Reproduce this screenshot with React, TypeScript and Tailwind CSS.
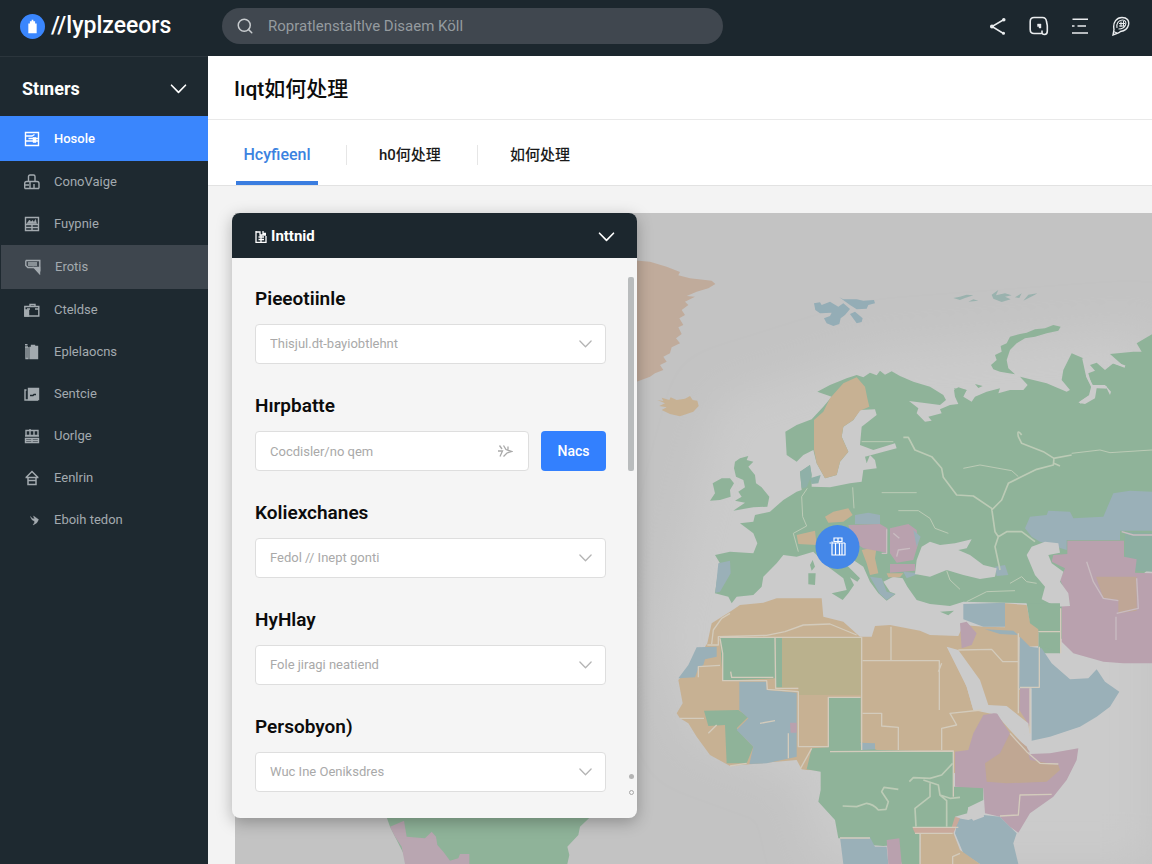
import React from "react";
import { Search } from "lucide-react";

const FONT =
  "font-[Roboto,'Noto_Sans_CJK_SC',sans-serif]";

function Chevron({ className }: { className: string }) {
  return (
    <svg viewBox="0 0 16 10" className={className} fill="none" stroke="currentColor" aria-hidden="true">
      <path d="M1 1.2 8 8.4 15 1.2" strokeWidth="1.6" strokeLinecap="round" strokeLinejoin="round" />
    </svg>
  );
}

const NAV: { label: string; row: string; icon: React.ReactNode }[] = [
  {
    label: "Hosole",
    row: "h-[45px] bg-[#3a86fd] text-white font-medium",
    icon: (
      <>
        <path d="M1.500 1.500h13v13h-13zM1.500 5h6.500l2.500-1.500M1.500 10h13M4.500 7.500H14" />
        <path d="M9 6.500h3v5H9z" fill="currentColor" strokeWidth=".5" />
      </>
    ),
  },
  {
    label: "ConoVaige",
    row: "h-[42px] text-[#a3aaaf]",
    icon: <path d="M4.500 7.500V2.500q0-1.500 1.500-1.500h3.500q1.500 0 1.500 1.500v5M4.500 7.500h6.500M.700 14.500V9.500q0-2 2-2h1.800M15 14.500V9.500q0-2-2-2h-2M.700 14.500H15M6 8v6M10 10v4M1 11h4" />,
  },
  {
    label: "Fuypnie",
    row: "h-[42px] text-[#a3aaaf]",
    icon: (
      <>
        <path d="M1.500 1.500h13v13h-13zM1.500 8.500h13M1.500 11.500h13M8 9v5" />
        <path d="M3 7.500 5.500 4 7 6l1.500-1.500L10 6.500l1.500-3 1 4z" fill="currentColor" strokeWidth=".6" />
      </>
    ),
  },
  {
    label: "Erotis",
    row: "h-[44px] ml-px bg-[#3e464e] text-[#a3aaaf]",
    icon: (
      <>
        <path d="M.800 1.500h14v11M.800 1.500v5l2 2H9M3 4h9M3 6h9" />
        <path d="M9 8.500h5.500v6z" fill="currentColor" />
      </>
    ),
  },
  {
    label: "Cteldse",
    row: "h-[42px] text-[#a3aaaf]",
    icon: (
      <>
        <path d="M.800 4.500h14v9.500h-14zM6 4.500V2.500h5v2M3 7h3M11 7h4" />
        <path d="M1 8h3.500v6H1z" fill="currentColor" />
      </>
    ),
  },
  {
    label: "Eplelaocns",
    row: "h-[42px] text-[#a3aaaf]",
    icon: (
      <>
        <path d="M1 .800h2.500M2 3v11.500h2V3M1 3h3" />
        <path d="M6 3.500h1.500v-2h3v1H13.500v12H6z" fill="currentColor" />
      </>
    ),
  },
  {
    label: "Sentcie",
    row: "h-[42px] text-[#a3aaaf]",
    icon: (
      <>
        <path d="M2.500 4H1v10h13" />
        <path d="M4.500 2.500h10v11h-10z" fill="currentColor" />
        <path d="M6 9.500h3l1-1h2" stroke="#1e2930" />
      </>
    ),
  },
  {
    label: "Uorlge",
    row: "h-[42px] text-[#a3aaaf]",
    icon: <path d="M2 2.500h12v5H2zM6 1v6.500M10 2v5.500M1 8h14M1.500 10.500h13v4h-13zM8 10.500v4M1.500 12.500h13" />,
  },
  {
    label: "Eenlrin",
    row: "h-[42px] text-[#a3aaaf]",
    icon: <path d="M2 7.500 8 1.500l6 6M1.500 7.500h13M4 8v6.500h8V8M4 10.500h8" strokeWidth="1.500" />,
  },
  {
    label: "Eboih tedon",
    row: "h-[42px] text-[#a3aaaf]",
    icon: (
      <path d="M6.500 4.500q1 2.500 4 2.500L9.500 4l5 3.500q-1 4-5.500 5.500 2-2 1.500-4-3-.500-4-4.500z" fill="currentColor" strokeWidth=".4" />
    ),
  },
];

function Sidebar() {
  return (
    <aside className="w-52 shrink-0 border-t border-[#2b353c] bg-[#1e2930]">
      <button type="button" className="flex h-[59px] w-full items-center justify-between pt-1 pr-[21px] pl-[22px] text-white">
        <span className="text-lg font-bold">Stıners</span>
        <Chevron className="h-[10px] w-[17px]" />
      </button>
      <nav>
        {NAV.map((item) => (
          <a key={item.label} href="#" className={`flex items-center gap-3.5 pl-6 text-[13px] ${item.row}`}>
            <svg viewBox="0 0 16 16" className="size-4" fill="none" stroke="currentColor" strokeWidth="1.4" aria-hidden="true">
              {item.icon}
            </svg>
            {item.label}
          </a>
        ))}
      </nav>
    </aside>
  );
}

function TopBar() {
  return (
    <header className="flex h-14 items-center bg-[#1c272e] pr-[21px] pl-5 text-white">
      <a href="#" className="flex w-[202px] shrink-0 items-center gap-1.5 pb-1">
        <svg viewBox="0 0 24 24" className="size-[25px]" aria-hidden="true">
          <circle cx="12" cy="12" r="12" fill="#3a86fd" />
          <path d="M8 9h8v9.500H8zM9.500 7h5v2h-5zM11.200 5.500h1.600V7h-1.600z" fill="#fff" />
        </svg>
        <span className="text-[23px] leading-8 font-medium">//lyplzeeors</span>
      </a>
      <label className="mb-1 flex h-9 w-full max-w-[501px] items-center gap-3.5 rounded-full bg-[#40474f] pl-3.5 text-[#c8cccf]">
        <Search className="size-[18px] shrink-0" strokeWidth={2} />
        <input
          type="search"
          aria-label="Search"
          placeholder="Ropratlenstaltlve Disaem Köll"
          className="w-full bg-transparent text-[15px] outline-none placeholder:text-[#959b9f]"
        />
      </label>
      <div className="ml-auto flex shrink-0 items-center gap-[21px] pb-1 text-[#e9ecee]">
        <button type="button" aria-label="Share">
          <svg viewBox="0 0 20 20" className="size-5" fill="none" stroke="currentColor" strokeWidth="1.500">
            <path d="M16 3.500 4 10.500l11.500 7" />
            <circle cx="15.800" cy="3.700" r="1" fill="currentColor" />
            <circle cx="4" cy="10.500" r="1.300" />
            <circle cx="15.500" cy="17.300" r=".8" fill="currentColor" />
          </svg>
        </button>
        <button type="button" aria-label="Capture">
          <svg viewBox="0 0 20 20" className="size-5" fill="none" stroke="currentColor" strokeWidth="1.600">
            <path d="M12.500 17.500H5Q1.200 17.500 1.200 13.500V5.500Q1.200 1.500 5 1.500h8.500q3.500 0 4 4l.8 4V15q0 3.500-2.800 3.500-2.500 0-2.500-2v-2" />
            <path d="M8.500 8h3.500v4h-2v-1.500H8.500z" fill="currentColor" strokeWidth=".4" />
          </svg>
        </button>
        <button type="button" aria-label="Menu">
          <svg viewBox="0 0 20 20" className="size-5" fill="none" stroke="currentColor" strokeWidth="1.600">
            <path d="M2.500 3.200H18M7.500 10H16M2 17h16M2 10h2.500" />
          </svg>
        </button>
        <button type="button" aria-label="Account">
          <svg viewBox="0 0 20 20" className="size-5" fill="none" stroke="currentColor" strokeWidth="1.400">
            <path d="M3 13.500C1.500 6 6 1.500 11 1.500c5 0 7.500 3 6.500 7.500-1 4-4.500 6-8 6.500l-1.500 1.200L2 19z" />
            <path d="M6 12C5 7.500 7.500 4 11.500 4c3 0 4 2.500 3 5-1 2.500-4 4-7 4M8 7.500h6M8 10h5.500M10 5.500v5.500M12.500 5v5M2.500 15.500 6 17" strokeWidth="1.100" />
          </svg>
        </button>
      </div>
    </header>
  );
}

function WorldMap() {
  return (
    <svg
      viewBox="235 213 917 651"
      preserveAspectRatio="xMinYMin slice"
      className="absolute inset-0 size-full"
      role="img"
      aria-label="Map"
    >
      <defs>
        <filter id="soft" x="-20%" y="-20%" width="140%" height="140%">
          <feGaussianBlur stdDeviation="22" />
        </filter>
      </defs>
      <rect x="235" y="213" width="917" height="651" fill="#c3c3c3" />
      <path d="M720 400 880 350 1152 330V864H820L800 780 690 740 660 640 700 470z" fill="#cbcbcb" filter="url(#soft)" />

      <g transform="translate(230 570) scale(.33333)">
        <path fill="#8fb399" d="M470 742 480 770 520 850 530 882H1012L1018 855 1012 830 1045 795 1050 770 1080 742z" />
        <path fill="#b9a6b1" d="M480 770 522 752 530 800 585 805 605 785 618 800 622 825 640 845 660 872 685 865 690 852 718 852V882H525L515 830 495 800z" />
      </g>

      <g transform="translate(630 210) scale(.33333)">
        <path fill="#c0ab9b" d="M0 150 60 155 110 170 150 186 145 196 180 205 245 212 256 222 235 235 200 245 170 258 195 260 165 275 175 285 155 300 165 315 148 325 160 345 145 352 155 372 138 385 150 400 125 412 120 430 100 440 110 455 90 465 100 480 75 490 60 500 20 515 0 518z" />
        <path fill="#c7b193" d="M82 570 100 573 95 563 118 570 122 562 140 570 165 566 180 558 188 570 202 572 206 588 190 605 150 619 120 612 95 600 110 592 88 588 105 580z" />
        <path fill="#94adb6" d="M552 280 570 277 575 285 600 275 625 290 640 280 660 297 645 315 632 325 628 342 610 348 590 340 582 325 600 318 605 308 570 310 556 300zM628 262 640 268 680 268 700 272 732 270 735 280 715 285 710 296 680 298 660 285zM660 312 675 305 698 325 695 336 680 340z" />
        <path fill="#9ab2ae" d="M970 264 990 260 1010 254 1030 256 1005 264 990 270zM1015 275 1045 272 1030 268zM1085 254 1105 240 1098 256 1125 250 1145 256 1125 260 1142 268 1115 276 1090 266zM1155 262 1175 250 1168 264zM1180 272 1215 254 1222 250 1195 254z" />
        <path fill="#8fb399" d="M1083 465 1100 450 1095 435 1115 425 1112 408 1130 400 1140 380 1170 372 1190 368 1215 358 1245 355 1270 345 1292 350 1285 362 1250 370 1215 380 1185 385 1160 400 1140 420 1130 450 1135 475 1155 493 1110 485 1090 478z" />
      </g>

      <g transform="translate(630 400) scale(.33333)">
        <path
          fill="#8fb399"
          d="M466 95 500 75 545 58 580 20 605-10 562-25 600-45 650-65 680-75 700-68 720-82 740-74 750-88 765-76 785-86 810-72 850-55 900-40 940-15 948 0 930 15 890 10 837 3 865 25 860 40 885 65 905 62 895 50 935 40 930 28 960 15 985 12 975-10 972-30 985-38 1010-30 1000-10 1025 5 1035-10 1070-25 1110-35 1105-20 1140-30 1180-30 1193-45 1170-70 1250-50 1310-25 1320-30 1295-60 1300-90 1325-140 1360-125 1370-70 1385-40 1380-15 1345 8 1365 12 1395-5 1400-35 1430-35 1440-15 1443-25 1425-45 1385-45 1375-80 1395-88 1380-105 1400-112 1425-90 1450-110 1485-98 1440-138 1510-145 1535-145 1520-170 1566-197V500L1290 720V760H1225V700L1190 610 1125 608 1000 605 960 618 900 612 860 600 832 560 818 535 790 530 760 545 780 575 797 582 770 602 745 580 720 545 700 500 670 480 600 440 640 485 690 535 682 545 660 532 672 555 655 580 638 600 605 580 650 570 640 535 600 505 550 455 500 470 460 465 440 490 400 530 395 560 370 585 320 590 305 610 295 590 255 580 262 530 270 490 255 465 300 455 370 460 382 430 370 400 330 370 370 365 375 345 420 335 460 300 500 275 515 270 510 215 540 195 545 225 545 260 600 262 660 250 695 245 700 210 740 205 735 180 720 165 710 190 705 170 800 145 795 130 730 150 690 135 695 80 740 45 735 28 690 30 670 60 640 80 635 110 655 155 630 185 620 225 585 235 560 190 550 150 520 165 500 185 470 165z"
        />
        <path fill="#8fb399" d="M315 185 330 175 355 168 350 180 370 185 355 200 375 225 378 250 395 262 418 290 412 320 370 322 310 332 345 308 315 302 335 290 325 275 345 262 340 240 318 230 312 205zM240 302 255 280 248 250 275 235 300 235 312 250 300 270 302 290 270 300zM535 520 557 520 555 555 535 553zM548 480 555 500 545 512 540 495zM930 635 972 632 955 646zM972-35 1010-30 995-10 985-15zM1035-48 1058-42 1045-36z" />
        <path fill="#c7b193" d="M680-68 705-40 712-5 718 20 690 32 670 60 640 80 635 110 655 155 630 185 620 225 585 235 560 190 552 150 552 60 580 35 600-5 640-50zM585 350 610 335 655 325 668 345 640 365 595 368zM500 405 555 392 560 435 505 432zM695 450 740 440 735 475 745 520 720 525 710 490zM770 520H820L810 532H775z" />
        <path fill="#b9a1ae" d="M655 375 750 372 772 385 770 458 700 445 670 425zM780 385 835 372 860 390 865 430 850 480 800 488 780 460zM780 492H855V512L780 518z" />
        <path fill="#9ab0b8" d="M675 345 715 338 750 345V372H675zM265 490 300 482 302 520 270 575 256 578zM850 390 872 410 860 440zM720 530 755 535 770 575 795 582 770 600 748 580zM1095 500 1125 495 1135 525 1100 528zM820 515 870 520 830 535z" />
        <path fill="#8fb0a8" d="M510 215 540 195 545 225 530 262 515 265zM540 235 572 225 565 250 545 252z" />
        <path fill="#9ab0b8" d="M1185 385 1200 350 1250 345 1255 332 1320 335 1330 355 1420 350 1450 280 1500 272 1566 275V392H1470V420H1310V450L1230 425 1205 410z" />
        <path fill="#8dafa2" d="M1485 395 1566 400V515L1520 512 1485 475z" />
        <path fill="#b9a1ae" d="M1312 422H1482V470L1520 478 1515 518 1566 520V790L1480 790 1420 785 1330 760 1295 725V615L1320 615 1300 560 1290 540 1305 505 1265 485 1270 465 1312 462z" />
        <path fill="#bfa696" d="M1398 530H1520V632L1465 640V600L1420 595z" />
        <path fill="#cbcbcb" d="M900 425 930 435 975 430 1025 418 1010 445 985 450 1020 465 1060 495 1100 505 1095 530 1050 537 1000 525 950 510 900 530 855 522 860 480 875 440zM1190 465 1205 440 1245 425 1285 430 1290 458 1255 465 1265 490 1300 515 1290 545 1315 580 1320 618 1280 620 1235 598 1245 560 1215 525z" />
        <g fill="none" stroke="#bccbb6" strokeWidth="5" strokeLinejoin="round">
          <path d="M820 112H835L855 150 905 170 935 205 940 232 980 285 1030 288 1085 325 1095 395 1105 410 1095 440 1110 510M1175 105Q1160 85 1165 110L1175 130 1240 155 1272 175 1270 195 1220 208 1165 235 1135 250 1115 300 1085 330M1272 190 1290 198M1270 175 1325 165M1105 410 1130 395 1175 395 1215 425" />
          <path d="M1325 160 1410 150 1440 158 1566 150M1000 205 1050 195 1145 212 1165 230M755 278H860M805 332H865L900 355 915 385 955 400M532 265 515 290 518 350 530 378 490 400 505 455M668 262 672 325M695 125H790M950 512 960 540 990 568M1010 605 1070 575 1155 572M1140 550 1175 530 1190 545 1220 550" strokeWidth="3" />
          <path d="M770 388V460H755M790 400 808 415M800 470 805 450 840 445M1370 485 1390 545 1420 595 1465 602M1520 535 1525 625 1460 640M1458 650V720M1475 395 1510 405 1566 405" stroke="#c9bcc1" strokeWidth="4" />
        </g>
        <path fill="none" stroke="#cbcbcb" strokeWidth="7" d="M1360-125 1372-70 1387-40 1380-12 1350 8M1387-40 1430-38M1430-120 1485-100" />
      </g>

      <g transform="translate(630 600) scale(.33333)">
        <path
          fill="#c7b193"
          d="M300 35 330 15 400 8 440-5 575-5 580 50 640 65 690 110 725 110 735 78 780 75 870 92 900 105 985 108 1000 75 1060 80 1125 82V10L1190 15 1200 65 1225 85V138L1195 140 1168 110V270L1200 270 1198 400 1130 345 1130 325 1050 325 1040 275 965 145 1010 260 1030 330 1100 345 1135 385 1200 455 1000 470V520L530 510 515 508 500 480 300 498 240 465 200 410 175 370 150 355 140 340 158 310 145 240 200 180 232 130 245 70z"
        />
        <path fill="#8fb399" d="M270 113H435V235L320 240 278 240zM595 292H692V425L740 450 970 455V560L1060 562V600L1015 622 1012 640 975 650 985 680 870 700V792H815L800 735 760 738 720 735 720 715H625L615 660 565 605 572 570V515L530 508 545 445 595 442zM222 332 325 330 355 350 335 370 320 385 350 420 370 440 350 490 290 490 285 375 235 378z" />
        <path fill="#bab18d" d="M440 113H692V285H505V262L440 265z" />
        <path fill="#8fb399" d="M436 113H456V262H438zM1190 10 1290 10V160L1228 135V90L1200 70z" />
        <path fill="#9ab0b8" d="M200 142 260 140V170L225 178 220 195 205 205 195 232 145 235 175 195zM328 245H410V270L500 278V470L480 475 410 490 358 492 370 440 345 415 320 390 355 355 328 330zM1000 12 1125 8V80L1060 80 1000 58zM1065 88 1150 92 1165 105 1110 102zM1170 110 1200 140 1235 145 1265 190 1320 238 1375 235 1400 208 1425 245 1468 275 1440 320 1400 350 1350 380 1260 410 1205 422 1205 265H1168zM1015 660 1060 645 1110 650 1160 700 1150 730 1165 792H1050L1000 760 975 700 985 655zM690 428 735 430 735 448 695 450zM630 712H720L735 740 770 740 775 792H640z" />
        <path fill="#b9a1ae" d="M990 70 1010 65 1040 100 1025 135 995 145zM1060 345 1100 338 1120 370 1140 400 1190 440 1200 462 1260 460 1345 445 1340 480 1310 540 1270 590 1200 640 1165 698 1140 680 1110 650 1065 640 1060 565 975 560V455L1015 450 1030 400zM770 720 808 715 815 792H775zM480 368H500V398H482zM1170 265H1200V380L1168 330z" />
        <path fill="#c2a98c" d="M1140 400 1190 440 1200 480 1285 495 1290 510 1250 545 1130 550 1070 545 1065 490 1110 460z" opacity=".8" />
        <path fill="#c9a99b" d="M848 684 965 682 975 650 990 655 970 700H855z" />
        <path fill="#c7b193" d="M872 702 970 698 990 750 1050 792H872z" />
        <path fill="#cbcbcb" d="M1015 622 1060 618 1062 650 1030 662 1012 640zM950 140 985 150 1050 240 1075 315 1130 318 1195 370 1200 410 1140 385 1110 342 1030 330 1010 260z" />
        <g fill="none" stroke="#d3cbbc" strokeWidth="4" strokeLinejoin="round">
          <path d="M245 132 250 90 275 55 300 40M232 135H265V110L410 106 465 95 520 75 600 72 680 105M270 112H695V450M783 80V182M698 182H928V330M698 340H755V378L805 382V450M935 450V385L980 375 960 340 1055 330M935 190 925 215M985 150 1085 148 1118 185H1165M1165 100V340M1228 140V262H1170M1200 265V400M1225 95H1290M1292 25V160" />
          <path d="M270 115 278 160V242L410 242 412 268 505 275V440H595V292H692M435 112 437 265H505M302 215 305 232H430M205 232V200L270 196M150 355H222M235 400 260 375M475 475V400M300 498 350 490M510 508 545 445M600 455 970 453V590M848 682H985M855 700H968M870 700V792M630 714H720M1110 648 1165 645 1170 585 1265 583M1140 400 1190 455 1230 490 1285 492M390 370 435 362M968 792V770L990 760" />
          <path d="M638 618 680 620 710 610Q730 612 745 630L768 628 775 605 755 575 762 562 805 568M838 545 850 533 900 535 935 525 968 490M880 540 925 555 930 585 950 602V680M900 550V590L855 625 858 680M930 585 960 595 990 592" strokeWidth="5" stroke="#bccbb6" />
        </g>
      </g>

      <circle cx="837.500" cy="547" r="22" fill="#4487e8" />
      <g fill="none" stroke="#fff" strokeWidth="1.200">
        <path d="M831 543h-1.500M832 541.500v13.500h13V543M835.500 543v12M839.500 543v12M842 543v12M834 538h8v3.500h-8zM838 538v5M832 543h13" />
      </g>
    </svg>
  );
}

const LABEL = "mb-[13px] block text-[19px] leading-6 font-semibold text-[#0c0c0c]";

const FIELD =
  "h-10 w-full appearance-none rounded-[4px] border border-[#dedede] bg-white px-3.5 text-[13px] text-[#a9a9a9] outline-none placeholder:text-[#a9a9a9]";

function SelectField({ id, label, value }: { id: string; label: string; value: string }) {
  return (
    <div>
      <label htmlFor={id} className={LABEL}>
        {label}
      </label>
      <div className="relative">
        <select id={id} className={FIELD}>
          <option>{value}</option>
        </select>
        <Chevron className="pointer-events-none absolute top-4 right-3.5 h-2 w-[13px] stroke-2 text-[#b4b4b4]" />
      </div>
    </div>
  );
}

function FilterCard() {
  return (
    <section className="relative -ml-[3px] w-[405px] max-w-full overflow-hidden rounded-lg bg-[#f5f5f5] shadow-[0_4px_16px_rgba(0,0,0,0.28)]">
      <button type="button" className="flex h-[45px] w-full items-center bg-[#1c272e] pt-0.5 pr-[22px] pl-[23px] text-white">
        <svg viewBox="0 0 12 12" className="mr-1 size-3" fill="none" stroke="currentColor" strokeWidth="1.300" aria-hidden="true">
          <path d="M1 0v11.500h10V5M1 1h4v3h6M8 0v2.500h3M3.500 6h5.500M3.500 8.500h5.500M6 4v7" />
        </svg>
        <span className="text-[15px] font-bold">Inttnid</span>
        <Chevron className="ml-auto h-[10px] w-[17px]" />
      </button>
      <form className="flex flex-col gap-[30px] pt-[29px] pr-[31px] pb-[26px] pl-[23px]">
        <SelectField id="f1" label="Pieeotiinle" value="Thisjul.dt-bayiobtlehnt" />
        <div>
          <label htmlFor="f2" className={LABEL}>
            Hırpbatte
          </label>
          <div className="flex gap-3">
            <div className="relative flex-1">
              <input id="f2" placeholder="Cocdisler/no qem" className={FIELD} />
              <svg viewBox="0 0 16 14" className="absolute top-[13px] right-4 h-3.5 w-4" fill="none" stroke="#a9a9a9" strokeWidth="1.300" aria-hidden="true">
                <path d="M2.500 1.500 5 5M1 7h4.500L3 12.500M6.500 1.500 9 5.500l5.500 2-4.500 1.500L6.500 12.500M11 2.500v3" />
              </svg>
            </div>
            <button type="button" className="h-10 w-[65px] rounded-[4px] bg-[#3380fe] text-sm font-medium text-white">
              Nacs
            </button>
          </div>
        </div>
        <SelectField id="f3" label="Koliexchanes" value="Fedol // Inept gonti" />
        <SelectField id="f4" label="HyHlay" value="Fole jiragi neatiend" />
        <SelectField id="f5" label="Persobyon)" value="Wuc Ine Oeniksdres" />
      </form>
      <div className="absolute top-16 right-[3px] h-[194px] w-[6px] rounded-[2px] bg-[#b9bcbd]" />
      <div className="absolute right-[3px] bottom-[23px] flex flex-col gap-[11px]">
        <span className="size-[5px] rounded-full bg-[#b4b4b4]" />
        <span className="size-[5px] rounded-full border border-[#a6a6a6]" />
      </div>
    </section>
  );
}

export default function App() {
  return (
    <div className={`flex min-h-screen flex-col bg-[#1c272e] ${FONT}`}>
      <TopBar />
      <div className="flex flex-1">
        <Sidebar />
        <main className="flex min-w-0 flex-1 flex-col bg-[#f3f3f3]">
          <h1 className="flex h-16 items-center border-b border-[#e9e9e9] bg-white px-[26px] pt-1 text-[21px] font-medium text-[#0c0c0c]">
            Iıqt如何处理
          </h1>
          <div className="flex h-[66px] items-center border-b border-[#e2e2e2] bg-white pl-7 text-[15px] font-medium text-[#1a1a1a]">
            <button type="button" className="relative h-full w-[82px] pt-1 text-base text-[#3b82e0]">
              Hcyfieenl
              <span className="absolute inset-x-0 bottom-0 h-1 bg-[#3a7de0]" />
            </button>
            <button type="button" className="mt-1 ml-7 h-5 border-l border-[#e6e6e6] pr-9 pl-8 leading-5">
              h0何处理
            </button>
            <button type="button" className="mt-1 h-5 border-l border-[#e6e6e6] px-8 leading-5">
              如何处理
            </button>
          </div>
          <div className="relative mt-[27px] ml-[27px] flex-1 pb-[46px]">
            <WorldMap />
            <FilterCard />
          </div>
        </main>
      </div>
    </div>
  );
}
